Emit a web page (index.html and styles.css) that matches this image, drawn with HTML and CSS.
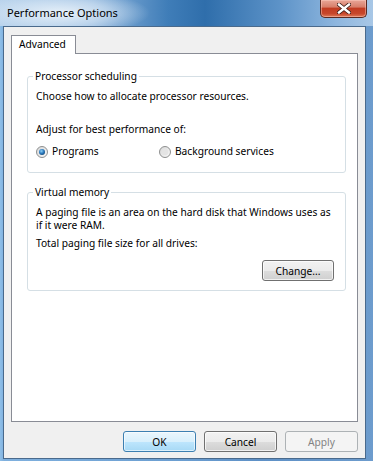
FILE: index.html
```html
<!DOCTYPE html>
<html>
<head>
<meta charset="utf-8">
<title>Performance Options</title>
<link rel="stylesheet" href="styles.css">
</head>
<body>
<div class="window">
  <div class="titlebar">
    <span class="title">Performance Options</span>
    <div class="close" aria-label="Close">
      <svg width="14" height="11" viewBox="0 0 14 11">
        <path d="M2 1.5 L12 9.5 M12 1.5 L2 9.5" stroke="#3a1a14" stroke-width="4" stroke-linecap="square"/>
        <path d="M2 1.5 L12 9.5 M12 1.5 L2 9.5" stroke="#ffffff" stroke-width="2.4" stroke-linecap="square"/>
      </svg>
    </div>
  </div>
  <div class="client">
    <div class="tabs">
      <div class="tab">Advanced</div>
    </div>
    <div class="page">
      <fieldset class="group group-cpu">
        <legend>Processor scheduling</legend>
        <p class="line">Choose how to allocate processor resources.</p>
        <p class="line gap-lg">Adjust for best performance of:</p>
        <div class="radios">
          <label class="radio radio-first">
            <svg class="radio-icon" width="12" height="12" viewBox="0 0 12 12">
              <defs>
                <linearGradient id="rbg" x1="0" y1="0" x2="1" y2="1">
                  <stop offset="0" stop-color="#d6d6d6"/>
                  <stop offset="1" stop-color="#fbfbfb"/>
                </linearGradient>
                <radialGradient id="dot" cx="0.4" cy="0.35" r="0.7">
                  <stop offset="0" stop-color="#8fd0f5"/>
                  <stop offset="0.55" stop-color="#2d7cc0"/>
                  <stop offset="1" stop-color="#144a7a"/>
                </radialGradient>
              </defs>
              <circle cx="6" cy="6" r="5.5" fill="url(#rbg)" stroke="#8e8f8f"/>
              <circle cx="6" cy="6" r="3" fill="url(#dot)"/>
            </svg>
            <span>Programs</span>
          </label>
          <label class="radio">
            <svg class="radio-icon" width="12" height="12" viewBox="0 0 12 12">
              <circle cx="6" cy="6" r="5.5" fill="url(#rbg)" stroke="#8e8f8f"/>
              <circle cx="6" cy="6" r="3.2" fill="#e4e4e4"/>
            </svg>
            <span>Background services</span>
          </label>
        </div>
      </fieldset>
      <fieldset class="group group-vm">
        <legend>Virtual memory</legend>
        <p class="para">A paging file is an area on the hard disk that Windows uses as<br>if it were RAM.</p>
        <p class="line gap-sm">Total paging file size for all drives:</p>
        <div class="btn-row">
          <button class="btn">Change...</button>
        </div>
      </fieldset>
    </div>
    <div class="footer">
      <button class="btn btn-default">OK</button>
      <button class="btn">Cancel</button>
      <button class="btn btn-disabled">Apply</button>
    </div>
  </div>
</div>
</body>
</html>
```

FILE: styles.css
```css
* { box-sizing: border-box; }

html, body {
  margin: 0;
  padding: 0;
}

body {
  font-family: "Noto Sans", "DejaVu Sans", sans-serif;
  font-size: 10.2px;
  color: #000;
  width: 373px;
  height: 461px;
  overflow: hidden;
}

.window {
  width: 373px;
  height: 461px;
  display: flex;
  flex-direction: column;
  background:
    linear-gradient(to right, #8fbfe8 0px, #7fb0de 4px, #6a9dd0 50%, #5e90c6 70%, #6d9ccd 100%);
}

.titlebar {
  height: 26px;
  flex: 0 0 26px;
  display: flex;
  justify-content: space-between;
  align-items: flex-start;
  padding: 0 6px 0 7px;
  background:
    radial-gradient(ellipse 90px 22px at 60px 13px, rgba(235, 243, 250, 0.95), rgba(220, 234, 247, 0.6) 55%, rgba(220, 234, 247, 0) 100%),
    linear-gradient(to right, #b3cfea 0%, #8db4dc 25%, #3f7db8 45%, #2f6eab 55%, #5d93c8 75%, #8eb6de 90%, #a8c7e6 100%);
}

.title {
  line-height: 26px;
  font-size: 11px;
  color: #000;
}

.close {
  width: 47px;
  height: 18px;
  border: 1px solid #5a2a22;
  border-top: none;
  border-radius: 0 0 5px 5px;
  background: linear-gradient(to bottom, #e9a697 0%, #d8806c 40%, #c23c22 50%, #c7472b 80%, #de7a58 100%);
  box-shadow: inset 0 0 0 1px rgba(255, 210, 200, 0.45);
  display: flex;
  align-items: center;
  justify-content: center;
}

.client {
  flex: 1;
  margin: 0 7px 2px 3px;
  border: 1px solid #4a6a8c;
  background: #f0f0f0;
  padding: 8px 7px 6px 7px;
  display: flex;
  flex-direction: column;
}

.tabs {
  display: flex;
  height: 18px;
  flex: 0 0 18px;
}

.tab {
  position: relative;
  z-index: 1;
  width: 65px;
  height: 19px;
  border: 1px solid #898c95;
  border-bottom: none;
  background: #fff;
  padding-left: 7px;
  line-height: 17px;
}

.page {
  flex: 1;
  border: 1px solid #898c95;
  background: #fff;
  padding: 0 11px 0 15px;
}

.group {
  margin: 0;
  border: 1px solid #d5dfe5;
  border-radius: 3px;
  padding: 7px 11px 14px 8px;
  min-width: 0;
}

.group-cpu { margin-top: 15px; }
.group-vm { margin-top: 12px; padding-top: 7px; padding-bottom: 9px; }

legend {
  line-height: 14px;
  padding: 0 2px;
  margin-left: -3px;
}

.line {
  margin: 0;
  line-height: 13px;
  white-space: nowrap;
}

.gap-lg { margin-top: 20px; }
.gap-sm { margin-top: 5px; }

.para {
  margin: 0;
  line-height: 13px;
  white-space: nowrap;
}

.radios {
  display: flex;
  margin-top: 9px;
  height: 13px;
  line-height: 13px;
}

.radio {
  display: flex;
  align-items: center;
  gap: 4px;
}

.radio-first { width: 123px; }

.radio-icon { flex: 0 0 12px; }

.btn-row {
  display: flex;
  justify-content: flex-end;
  margin-top: 10px;
}

.btn {
  font-family: inherit;
  font-size: 10.2px;
  color: #000;
  width: 72px;
  height: 21px;
  padding: 0;
  border: 1px solid #707070;
  border-radius: 3px;
  background: linear-gradient(to bottom, #f2f2f2 0%, #ebebeb 50%, #dddddd 51%, #cfcfcf 100%);
  box-shadow: inset 0 0 0 1px rgba(255, 255, 255, 0.7);
}

.footer {
  display: flex;
  justify-content: flex-end;
  gap: 8px;
  margin-top: 9px;
  flex: 0 0 21px;
}

.footer .btn { width: 73px; }

.btn-default {
  border-color: #3c7fb1;
  background: linear-gradient(to bottom, #eaf6fd 0%, #d9f0fc 50%, #bee6fd 51%, #a7d9f5 100%);
  box-shadow: inset 0 0 0 1px rgba(255, 255, 255, 0.6);
}

.btn-disabled {
  border-color: #adb2b5;
  background: #f4f4f4;
  color: #838383;
  box-shadow: none;
}
```
